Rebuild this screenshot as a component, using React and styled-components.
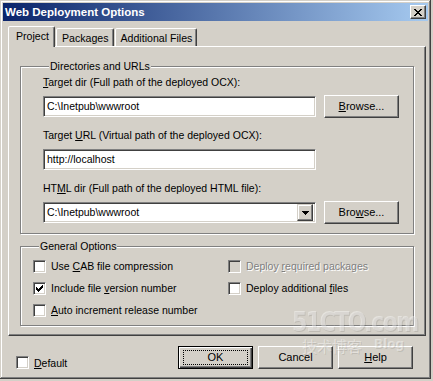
import React from 'react';
import styled, { createGlobalStyle } from 'styled-components';

const Global = createGlobalStyle`
  html, body { margin: 0; padding: 0; background: #d4d0c8; }
  body {
    font-family: "Liberation Sans", Tahoma, Arial, sans-serif;
    font-size: 10.5px;
    color: #000;
  }
`;

const Window = styled.div`
  position: relative;
  width: 431px;
  height: 379px;
  box-sizing: border-box;
  padding: 3px;
  background: #d4d0c8;
  box-shadow: inset -1px -1px #404040, inset 1px 1px #d4d0c8,
    inset -2px -2px #808080, inset 2px 2px #fff;
  display: flex;
  flex-direction: column;
  overflow: hidden;
`;

const TitleBar = styled.div`
  height: 18px;
  flex: none;
  display: flex;
  align-items: center;
  justify-content: space-between;
  padding: 0 2px 0 2px;
  background: linear-gradient(to right, #0a246a, #a6caf0);
  color: #fff;
  font-weight: bold;
  font-size: 11.5px;
`;

const CloseBox = styled.div`
  width: 16px;
  height: 14px;
  box-sizing: border-box;
  background: #d4d0c8;
  border: 1px solid;
  border-color: #fff #404040 #404040 #fff;
  box-shadow: inset -1px -1px #808080;
  display: flex;
  align-items: center;
  justify-content: center;
`;

const Body = styled.div`
  padding: 5px 0 0 5px;
  display: flex;
  flex-direction: column;
`;

const TabStrip = styled.div`
  display: flex;
  align-items: flex-end;
  height: 20px;
  position: relative;
  z-index: 1;
`;

const Tab = styled.div`
  box-sizing: border-box;
  height: ${p => (p.$active ? '21px' : '18px')};
  margin-bottom: ${p => (p.$active ? '-1px' : '0')};
  padding: ${p => (p.$active ? '0 5px 2px 7px' : '0 4px 0 5px')};
  margin-right: 1px;
  background: #d4d0c8;
  border: 1px solid;
  border-bottom: none;
  border-color: #fff #404040 transparent #fff;
  border-radius: 2px 2px 0 0;
  box-shadow: inset -1px 0 #808080;
  display: flex;
  align-items: center;
  white-space: nowrap;
  font-size: 10.6px;
`;

const Panel = styled.div`
  width: 418px;
  height: 290px;
  box-sizing: border-box;
  border: 1px solid;
  border-color: #fff #404040 #404040 #fff;
  box-shadow: inset -1px -1px #808080;
  padding: 13px 11px 0 11px;
  display: flex;
  flex-direction: column;
`;

const Group = styled.fieldset`
  margin: ${p => p.$top || '0'} 0 0 0;
  padding: ${p => p.$pad};
  border: 1px solid #808080;
  box-shadow: 1px 1px 0 #fff, inset 1px 1px 0 #fff;
  min-inline-size: auto;
`;

const Legend = styled.legend`
  padding: 0 1px;
  margin-left: 6px;
  line-height: 13px;
  background: #d4d0c8;
`;

const Field = styled.div`
  display: flex;
  flex-direction: column;
  gap: 6px;
  & + & {
    margin-top: 11px;
  }
`;

const Label = styled.div`
  line-height: 13px;
  white-space: nowrap;
`;

const Key = styled.span`
  text-decoration: underline;
`;

const Row = styled.div`
  display: flex;
  align-items: center;
  gap: 8px;
  height: 23px;
`;

const sunken = `
  box-sizing: border-box;
  border: 1px solid;
  border-color: #808080 #fff #fff #808080;
  box-shadow: inset 1px 1px #404040, inset -1px -1px #d4d0c8;
`;

const TextBox = styled.div`
  ${sunken}
  width: 273px;
  height: 21px;
  background: #fff;
  padding: 0 3px;
  display: flex;
  align-items: center;
  line-height: 13px;
`;

const Combo = styled(TextBox)`
  padding: 2px 2px 2px 3px;
  justify-content: space-between;
`;

const DropButton = styled.div`
  width: 16px;
  height: 17px;
  box-sizing: border-box;
  background: #d4d0c8;
  border: 1px solid;
  border-color: #d4d0c8 #404040 #404040 #d4d0c8;
  box-shadow: inset -1px -1px #808080, inset 1px 1px #fff;
  display: flex;
  align-items: center;
  justify-content: center;
`;

const Button = styled.div`
  width: 75px;
  height: 23px;
  box-sizing: border-box;
  flex: none;
  background: #d4d0c8;
  border: 1px solid;
  border-color: ${p => (p.$default ? '#000' : '#fff #404040 #404040 #fff')};
  box-shadow: ${p =>
    p.$default
      ? 'inset 1px 1px #fff, inset -1px -1px #404040, inset -2px -2px #808080'
      : 'inset -1px -1px #808080'};
  display: flex;
  align-items: center;
  justify-content: center;
  padding-bottom: 1px;
  font-size: 11px;
`;

const FocusRing = styled.span`
  box-sizing: border-box;
  width: 65px;
  height: 15px;
  border: 1px dotted #000;
  display: flex;
  align-items: center;
  justify-content: center;
`;

const Options = styled.div`
  display: grid;
  grid-template-columns: 195px 1fr;
  grid-auto-rows: 22px;
`;

const CheckRow = styled.div`
  display: flex;
  align-items: center;
  gap: 5px;
  white-space: nowrap;
  color: ${p => (p.$disabled ? '#808080' : '#000')};
  text-shadow: ${p => (p.$disabled ? '1px 1px 0 #fff' : 'none')};
`;

const Box = styled.span`
  ${sunken}
  width: 13px;
  height: 13px;
  flex: none;
  background: ${p => (p.$disabled ? '#d4d0c8' : '#fff')};
  display: flex;
  align-items: center;
  justify-content: center;
`;

const Footer = styled.div`
  display: flex;
  align-items: flex-start;
  padding: 10px 15px 0 8px;
`;

const DefaultCheck = styled(CheckRow)`
  margin-top: 10px;
`;

const Buttons = styled.div`
  margin-left: auto;
  display: flex;
  gap: 5px;
`;

const Watermark = styled.div`
  position: absolute;
  left: 292px;
  top: 308px;
  pointer-events: none;
  color: rgba(255, 255, 255, 0.4);
  text-shadow: 1px 1px 0 rgba(0, 0, 0, 0.1);
  font-family: "DejaVu Sans", sans-serif;
  line-height: 1;
`;

const WmBig = styled.div`
  font-size: 27px;
  font-weight: bold;
  letter-spacing: -2px;
  transform: scaleX(0.82);
  transform-origin: left;
`;

const WmSmall = styled.div`
  display: flex;
  align-items: flex-start;
  gap: 12px;
  margin: 3px 0 0 10px;
  font-size: 15px;
  font-family: "Noto Sans CJK SC", sans-serif;
`;

const WmBlog = styled.span`
  font-size: 12px;
  font-family: "DejaVu Sans", sans-serif;
  font-weight: bold;
`;

const pix = (rows, fill) =>
  rows.flatMap((r, y) => r.map(([x, w]) => <rect key={`${x}-${y}`} x={x} y={y} width={w} height={1} fill={fill} />));

const XGlyph = () => (
  <svg width="8" height="7" viewBox="0 0 8 7" shapeRendering="crispEdges">
    {pix(
      [
        [[0, 2], [6, 2]],
        [[1, 2], [5, 2]],
        [[2, 4]],
        [[3, 2]],
        [[2, 4]],
        [[1, 2], [5, 2]],
        [[0, 2], [6, 2]],
      ],
      '#000'
    )}
  </svg>
);

const Arrow = () => (
  <svg width="7" height="4" viewBox="0 0 7 4" shapeRendering="crispEdges">
    {pix([[[0, 7]], [[1, 5]], [[2, 3]], [[3, 1]]], '#000')}
  </svg>
);

const Tick = () => (
  <svg width="7" height="7" viewBox="0 0 7 7" shapeRendering="crispEdges">
    {pix(
      [
        [[6, 1]],
        [[5, 2]],
        [[0, 1], [4, 3]],
        [[0, 2], [3, 3]],
        [[0, 5]],
        [[1, 3]],
        [[2, 1]],
      ],
      '#000'
    )}
  </svg>
);

const Checkbox = ({ checked, disabled, children }) => (
  <CheckRow $disabled={disabled}>
    <Box $disabled={disabled}>{checked && <Tick />}</Box>
    <span>{children}</span>
  </CheckRow>
);

export default function App() {
  return (
    <>
      <Global />
      <Window>
        <TitleBar>
          <span>Web Deployment Options</span>
          <CloseBox>
            <XGlyph />
          </CloseBox>
        </TitleBar>
        <Body>
          <TabStrip>
            <Tab $active>Project</Tab>
            <Tab>Packages</Tab>
            <Tab>Additional Files</Tab>
          </TabStrip>
          <Panel>
            <Group $pad="3px 13px 9px 22px">
              <Legend>Directories and URLs</Legend>
              <Field>
                <Label>
                  <Key>T</Key>arget dir (Full path of the deployed OCX):
                </Label>
                <Row>
                  <TextBox>C:\Inetpub\wwwroot</TextBox>
                  <Button>
                    <span>
                      <Key>B</Key>rowse...
                    </span>
                  </Button>
                </Row>
              </Field>
              <Field>
                <Label>
                  Target <Key>U</Key>RL (Virtual path of the deployed OCX):
                </Label>
                <Row>
                  <TextBox>http://localhost</TextBox>
                </Row>
              </Field>
              <Field>
                <Label>
                  HT<Key>M</Key>L dir (Full path of the deployed HTML file):
                </Label>
                <Row>
                  <Combo>
                    <span>C:\Inetpub\wwwroot</span>
                    <DropButton>
                      <Arrow />
                    </DropButton>
                  </Combo>
                  <Button>
                    <span>
                      Bro<Key>w</Key>se...
                    </span>
                  </Button>
                </Row>
              </Field>
            </Group>
            <Group $top="6px" $pad="2px 12px 4px 12px">
              <Legend>General Options</Legend>
              <Options>
                <Checkbox>
                  Use <Key>C</Key>AB file compression
                </Checkbox>
                <Checkbox disabled>
                  Deploy <Key>r</Key>equired packages
                </Checkbox>
                <Checkbox checked>
                  Include file <Key>v</Key>ersion number
                </Checkbox>
                <Checkbox>
                  Deploy additional <Key>f</Key>iles
                </Checkbox>
                <Checkbox>
                  <Key>A</Key>uto increment release number
                </Checkbox>
              </Options>
            </Group>
          </Panel>
          <Footer>
            <DefaultCheck>
              <Box />
              <span>
                <Key>D</Key>efault
              </span>
            </DefaultCheck>
            <Buttons>
              <Button $default>
                <FocusRing>OK</FocusRing>
              </Button>
              <Button>Cancel</Button>
              <Button>
                <span>
                  <Key>H</Key>elp
                </span>
              </Button>
            </Buttons>
          </Footer>
        </Body>
        <Watermark>
          <WmBig>51CTO.com</WmBig>
          <WmSmall>
            <span>技术博客</span>
            <WmBlog>Blog</WmBlog>
          </WmSmall>
        </Watermark>
      </Window>
    </>
  );
}
